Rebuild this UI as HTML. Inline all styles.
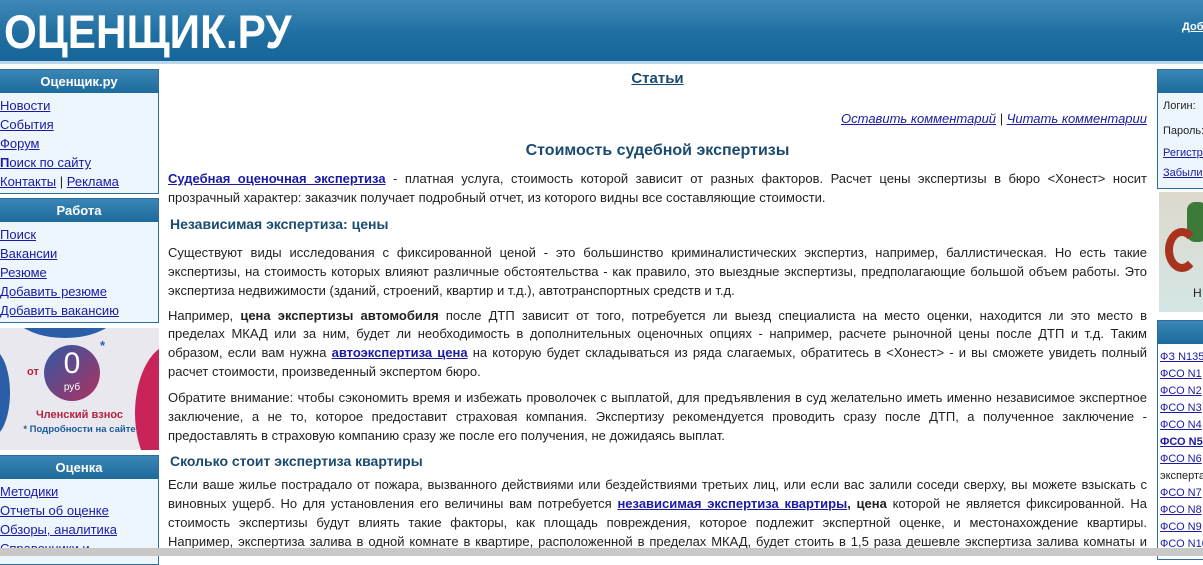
<!DOCTYPE html>
<html><head><meta charset="utf-8"><style>
*{margin:0;padding:0;box-sizing:border-box}
html,body{width:1203px;height:556px;overflow:hidden;background:#fff;font-family:"Liberation Sans",Arial,sans-serif;font-size:13px;color:#222}
a{color:#1a1aa6}
#hdr{position:absolute;left:0;top:0;width:1203px;height:64px;background:linear-gradient(#3e88b8,#1d6d9f 60%,#16669a);border-bottom:3px solid #b9d6ea}
#logo{position:absolute;left:4px;top:7px;color:#fff;font-weight:bold;font-size:47px;line-height:50px;transform:scaleX(0.9);transform-origin:0 0;white-space:nowrap}
#add{position:absolute;left:1182px;top:21px;color:#fff;font-size:11px;font-weight:bold;text-decoration:underline}
.box{position:absolute;border:1px solid #2f6e9c;background:#eef6fd}
.bh{height:23px;background:linear-gradient(#3a86b6,#1d6a9c);color:#fff;font-weight:bold;text-align:center;line-height:23px;font-size:13px}
.box a,.box div.l{display:block;height:19px;line-height:19px;font-size:13px}
#banner{position:absolute;left:0;top:328px;width:159px;height:122px;background:#e8e8ee;overflow:hidden}
#main{position:absolute;left:168px;top:0;width:979px}
p{line-height:18.7px;margin-bottom:6px;font-size:13px}
p span{display:block;white-space:nowrap;text-align:justify;text-align-last:justify}
p span.e{text-align-last:left}
h2{font-size:14px;color:#1a4a70;margin:0 0 10px 2px;line-height:19px}
.r a{font-size:11px;height:17px;line-height:17px;padding-left:2px}
#bot{position:absolute;left:0;top:548px;width:1203px;height:8px;background:#c8c8c8}
</style></head><body>
<div id="hdr"><div id="logo">ОЦЕНЩИК.РУ</div><div id="add">Доб</div></div>

<div class="box" style="left:-1px;top:69px;width:160px;height:125px">
<div class="bh">Оценщик.ру</div><div style="padding-top:3px">
<a href="#">Новости</a><a href="#">События</a><a href="#">Форум</a><a href="#"><b>П</b>оиск по сайту</a><div class="l"><a href="#" style="display:inline">Контакты</a> | <a href="#" style="display:inline">Реклама</a></div></div></div>

<div class="box" style="left:-1px;top:198px;width:160px;height:125px">
<div class="bh">Работа</div><div style="padding-top:3px">
<a href="#">Поиск</a><a href="#">Вакансии</a><a href="#">Резюме</a><a href="#">Добавить резюме</a><a href="#">Добавить вакансию</a></div></div>

<div id="banner">
<div style="position:absolute;left:-30px;top:20px;width:40px;height:90px;border-radius:50%;background:#2a5ea8"></div>
<div style="position:absolute;left:10px;top:-50px;width:110px;height:60px;border-radius:50%;background:#2a5ea8"></div>
<div style="position:absolute;left:135px;top:15px;width:80px;height:140px;border-radius:50%;background:#c8245a"></div>
<div style="position:absolute;left:44px;top:17px;width:56px;height:56px;border-radius:50%;background:linear-gradient(135deg,#2d5aa6,#b0305e);color:#fff;text-align:center;font-size:30px;line-height:38px">0<div style="font-size:10px;line-height:10px">руб</div></div>
<div style="position:absolute;left:27px;top:38px;color:#b3243f;font-weight:bold;font-size:11px">от</div>
<div style="position:absolute;left:100px;top:10px;color:#2a5ea8;font-weight:bold">*</div>
<div style="position:absolute;left:0;width:159px;top:81px;text-align:center;color:#b3243f;font-weight:bold;font-size:11px">Членский взнос</div>
<div style="position:absolute;left:0;width:159px;top:96px;text-align:center;color:#1a5a9a;font-weight:bold;font-size:9.5px">* Подробности на сайте</div>
</div>

<div class="box" style="left:-1px;top:455px;width:160px;height:110px">
<div class="bh">Оценка</div><div style="padding-top:3px">
<a href="#">Методики</a><a href="#">Отчеты об оценке</a><a href="#">Обзоры, аналитика</a><a href="#">Справочники и</a></div></div>

<div id="main">
<div style="text-align:center;margin-top:70px;font-size:15px;font-weight:bold"><a href="#" style="color:#1a4a70">Статьи</a></div>
<div style="text-align:right;margin-top:24px;font-style:italic;font-size:13px;line-height:16px"><a href="#">Оставить комментарий</a> | <a href="#">Читать комментарии</a></div>
<div style="text-align:center;margin-top:14px;font-size:16px;font-weight:bold;color:#1a4a70;line-height:20px;margin-bottom:9px">Стоимость судебной экспертизы</div>
<p style="margin-bottom:8px"><span><a href="#"><b>Судебная оценочная экспертиза</b></a> - платная услуга, стоимость которой зависит от разных факторов. Расчет цены экспертизы в бюро &lt;Хонест&gt; носит</span><span class="e">прозрачный характер: заказчик получает подробный отчет, из которого видны все составляющие стоимости.</span></p>
<h2 style="margin-top:3px">Независимая экспертиза: цены</h2>
<p><span>Существуют виды исследования с фиксированной ценой - это большинство криминалистических экспертиз, например, баллистическая. Но есть такие</span><span>экспертизы, на стоимость которых влияют различные обстоятельства - как правило, это выездные экспертизы, предполагающие большой объем работы. Это</span><span class="e">экспертиза недвижимости (зданий, строений, квартир и т.д.), автотранспортных средств и т.д.</span></p>
<p style="margin-bottom:8px"><span>Например, <b>цена экспертизы автомобиля</b> после ДТП зависит от того, потребуется ли выезд специалиста на место оценки, находится ли это место в</span><span>пределах МКАД или за ним, будет ли необходимость в дополнительных оценочных опциях - например, расчете рыночной цены после ДТП и т.д. Таким</span><span>образом, если вам нужна <a href="#"><b>автоэкспертиза цена</b></a> на которую будет складываться из ряда слагаемых, обратитесь в &lt;Хонест&gt; - и вы сможете увидеть полный</span><span class="e">расчет стоимости, произведенный экспертом бюро.</span></p>
<p style="margin-bottom:7px"><span>Обратите внимание: чтобы сэкономить время и избежать проволочек с выплатой, для предъявления в суд желательно иметь именно независимое экспертное</span><span>заключение, а не то, которое предоставит страховая компания. Экспертизу рекомендуется проводить сразу после ДТП, а полученное заключение -</span><span class="e">предоставлять в страховую компанию сразу же после его получения, не дожидаясь выплат.</span></p>
<h2 style="margin-bottom:5px">Сколько стоит экспертиза квартиры</h2>
<p><span>Если ваше жилье пострадало от пожара, вызванного действиями или бездействиями третьих лиц, или если вас залили соседи сверху, вы можете взыскать с</span><span>виновных ущерб. Но для установления его величины вам потребуется <a href="#"><b>независимая экспертиза квартиры</b></a><b>, цена</b> которой не является фиксированной. На</span><span>стоимость экспертизы будут влиять такие факторы, как площадь повреждения, которое подлежит экспертной оценке, и местонахождение квартиры.</span><span>Например, экспертиза залива в одной комнате в квартире, расположенной в пределах МКАД, будет стоить в 1,5 раза дешевле экспертиза залива комнаты и</span></p>
</div>

<div class="box" style="left:1157px;top:69px;width:60px;height:120px;font-size:11px">
<div class="bh"></div>
<div style="position:absolute;top:30px;left:5px">Логин:</div>
<div style="position:absolute;top:55px;left:5px">Пароль:</div>
<a href="#" style="position:absolute;top:74px;left:5px;font-size:11px">Регистрация</a>
<a href="#" style="position:absolute;top:94px;left:5px;font-size:11px">Забыли</a>
</div>
<div style="position:absolute;left:1159px;top:192px;width:44px;height:120px;background:linear-gradient(#ddd9cc,#d4e6e4);overflow:hidden">
<div style="position:absolute;left:28px;top:10px;width:20px;height:40px;background:#3d7a3a;border-radius:8px"></div>
<div style="position:absolute;left:6px;top:36px;width:34px;height:44px;border-radius:50%;border:8px solid #a8321e;border-right-color:transparent"></div>
<div style="position:absolute;left:34px;top:94px;font-size:12px">Н</div>
</div>
<div class="box r" style="left:1157px;top:320px;width:60px;height:240px;background:#fff">
<div class="bh"></div><div style="padding-top:5px">
<a href="#">ФЗ N135</a><a href="#">ФСО N1</a><a href="#">ФСО N2</a><a href="#">ФСО N3</a><a href="#">ФСО N4</a><a href="#"><b>ФСО N5</b></a><a href="#">ФСО N6</a><div style="font-size:11px;height:17px;line-height:17px;padding-left:2px">эксперта</div><a href="#">ФСО N7</a><a href="#">ФСО N8</a><a href="#">ФСО N9</a><a href="#">ФСО N10</a></div></div>
<div id="bot"></div>
</body></html>
